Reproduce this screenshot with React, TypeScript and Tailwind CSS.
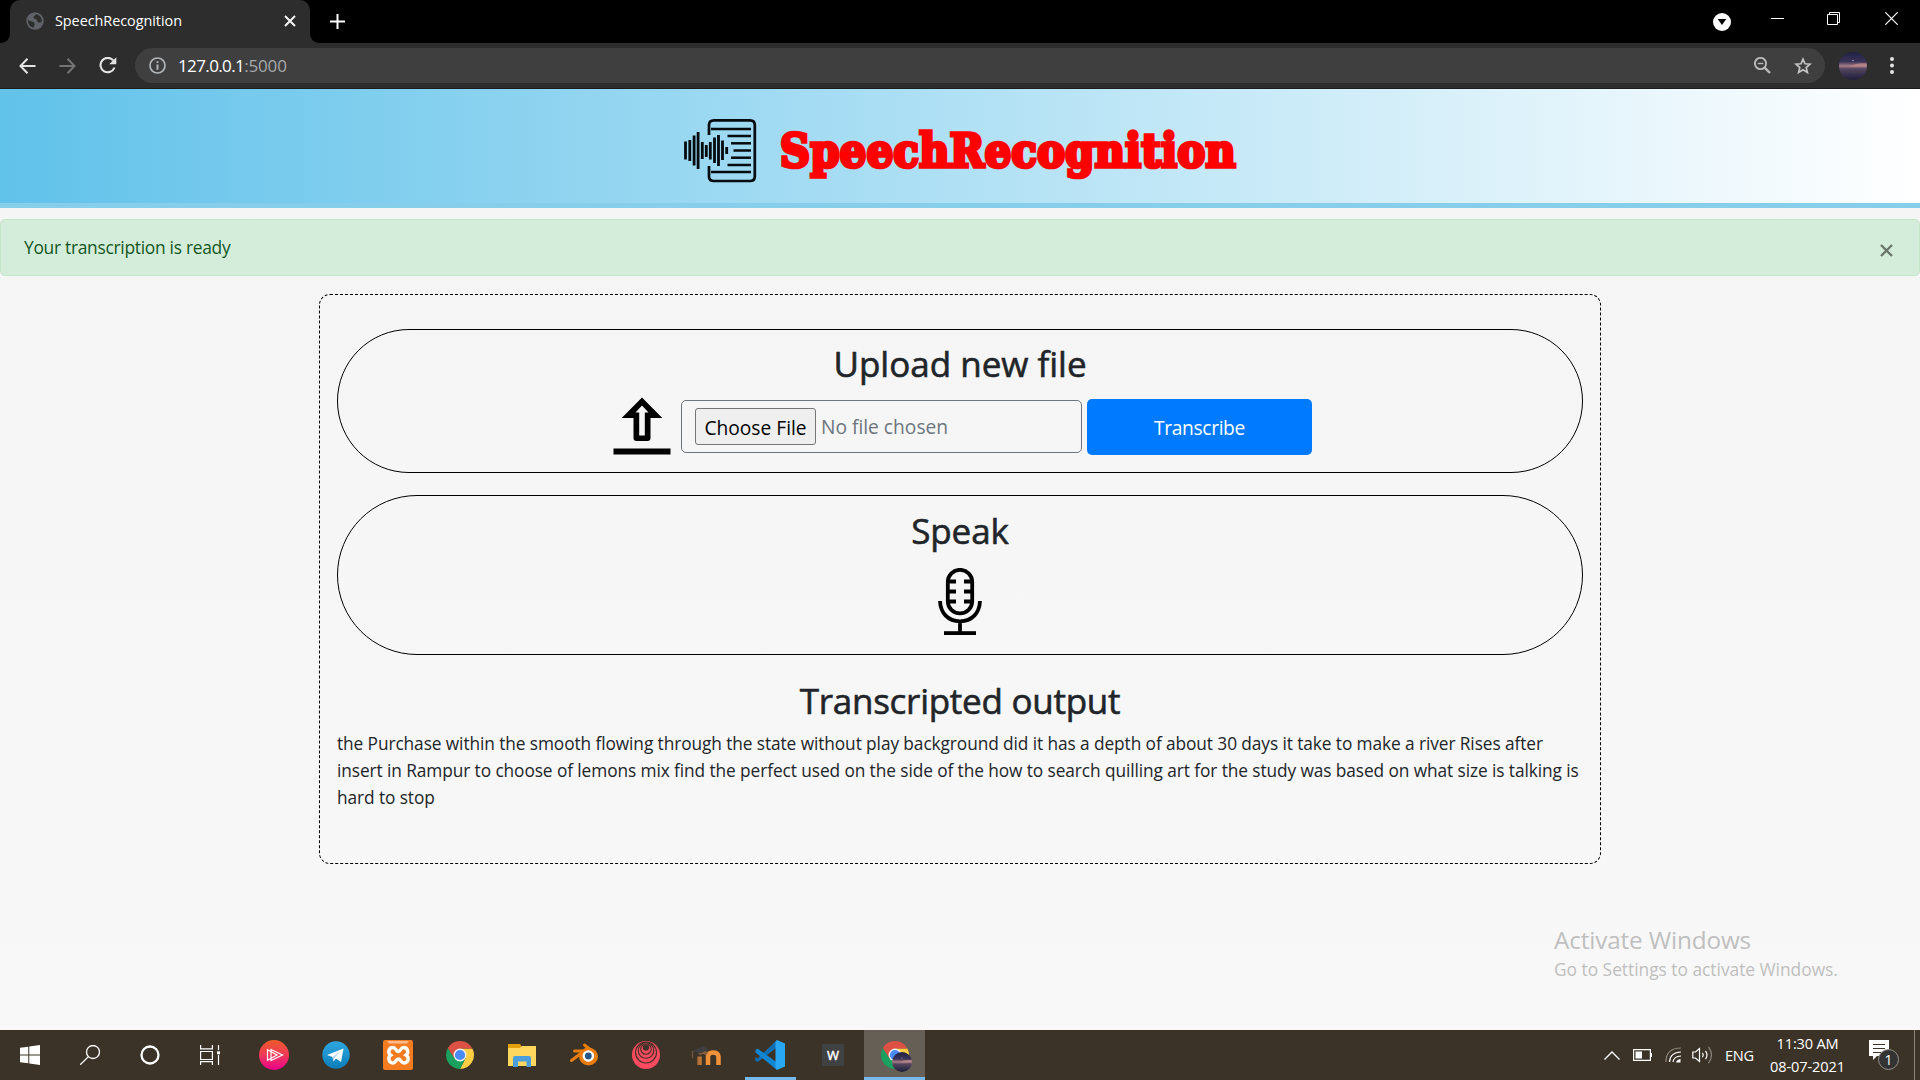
import type { ReactNode } from "react";

const bars: [number, number, number][] = [
  [686, 141.5, 159.5], [690.3, 140, 161], [694.6, 135.5, 165.5], [698.6, 132, 169], [702.8, 142, 159], [706.8, 145, 157],
  [710.8, 142, 159.5], [715, 137.5, 163], [719, 135, 166], [723, 140.5, 160], [727.2, 147, 154],
];
const lines: [number, number][] = [
  [711.5, 129], [728, 136], [731.5, 143.3], [734, 150.5], [731.5, 157.7], [728, 165], [711.5, 172],
];

function WaveLogo() {
  return (
    <svg className="h-[66px] w-[74px]" viewBox="683.5 118 74 66" fill="none" stroke="#050b0e">
      <path d="M709.5 135V125Q709.5 120.3 714.5 120.3H750.500Q755.300 120.3 755.300 125V176.500Q755.300 181 750.500 181H714.500Q709.500 181 709.500 176.500V166" strokeWidth="2.700" />
      {bars.map(([x, a, b]) => <path key={x} d={`M${x} ${a}V${b}`} strokeWidth="2.800" />)}
      {lines.map(([x, y]) => <path key={y} d={`M${x} ${y}H751.5`} strokeWidth="2.500" />)}
    </svg>
  );
}

function UploadIcon() {
  return (
    <svg className="h-[58px] w-[58px]" viewBox="613 397 58 58">
      <path d="M642 397.500L662.300 418H650.500V438Q650.500 441 647.500 441H636.500Q633.500 441 633.500 438V418H621.700Z" fill="#000" />
      <path d="M642 405.500L648.500 412.500H644.800V435.500H639.200V412.500H635.500Z" fill="#f6f6f6" />
      <path d="M613.500 448.500H670.500V454.600H613.500Z" fill="#000" />
    </svg>
  );
}

function MicIcon() {
  return (
    <svg className="h-[68px] w-[46px]" viewBox="937 568 46 68" fill="none" stroke="#000">
      <rect x="947.800" y="569.800" width="24.400" height="43.600" rx="12.200" strokeWidth="3.800" />
      <path d="M948 581.500H956M948 591.500H956M948 601.500H956M964 581.500H972M964 591.500H972M964 601.500H972M940 601C940.500 613 948 621.300 960 621.300S979.500 613 980 601M960 621V633" strokeWidth="3.800" />
      <path d="M944 633.100H976" strokeWidth="3.800" />
    </svg>
  );
}

function Chrome({ className }: { className: string }) {
  return (
    <svg className={className} viewBox="0 0 28 28">
      <path d="M14 7.500H26.400A14 14 0 0 1 14 28L19.600 17.200Z" fill="#ffce43" />
      <path d="M1.880 7A14 14 0 0 0 14 28L19.600 17.200L8.400 17.200Z" fill="#1aa15f" />
      <path d="M1.880 7A14 14 0 0 1 26.400 7.500H14L8.400 17.200Z" fill="#dd5144" />
      <circle cx="14" cy="14" r="6.500" fill="#f1f1f1" />
      <circle cx="14" cy="14" r="5.100" fill="#4a8af5" />
    </svg>
  );
}

function Avatar({ className }: { className: string }) {
  return (
    <svg className={className} viewBox="0 0 28 28">
      <defs>
        <linearGradient id="sky" x1="0" y1="0" x2="0" y2="1">
          <stop offset="0" stopColor="#1f2144" />
          <stop offset=".35" stopColor="#3a3358" />
          <stop offset=".5" stopColor="#a97e88" />
          <stop offset=".6" stopColor="#54455f" />
          <stop offset="1" stopColor="#1d1f3b" />
        </linearGradient>
      </defs>
      <circle cx="14" cy="14" r="14" fill="url(#sky)" />
      <path d="M10 14.500Q20 10 27.700 11.500V14.500Z" fill="#c58d8b" opacity=".7" />
      <circle cx="14" cy="8.500" r=".7" fill="#b9b3cf" />
    </svg>
  );
}

function TabStrip() {
  return (
    <div className="flex h-[43px] bg-black">
      <div className="flex w-[10px] items-end bg-[#2d2d2d]"><div className="h-full w-full rounded-br-[9px] bg-black" /></div>
      <div className="flex h-full w-[300px] items-center rounded-t-[10px] bg-[#2d2d2d] pl-4">
        <svg className="mt-[-1px] h-[18px] w-[18px]" viewBox="0 0 18 18">
          <circle cx="9" cy="9" r="8.700" fill="#5f6368" />
          <path d="M2 8C4 8.500 4.500 9.800 6.500 9.800C8.500 10 8.500 11.500 8.500 13L7.500 15.800C4 15 1.800 12 2 8Z" fill="#2d2d2d" />
          <path d="M10.500 2.300C9.500 3.500 7.500 4 7.500 5.500C7.500 7 9.500 6.500 10.500 7.500C11.500 8.500 11 10 12.500 10.500C14 10.800 15 10 15.800 9.500C16.200 5.800 13.500 3 10.500 2.300Z" fill="#2d2d2d" />
        </svg>
        <span className="mt-[-2px] ml-[11px] w-[229px] text-[14.4px] leading-5 tracking-[-0.04px] whitespace-nowrap text-white">SpeechRecognition</span>
        <svg className="mt-[-1px] h-[12px] w-[12px] shrink-0" viewBox="0 0 12 12" stroke="#f5f5f5" strokeWidth="2"><path d="M1 1L11 11M11 1L1 11" /></svg>
      </div>
      <div className="w-[10px] bg-[#2d2d2d]"><div className="h-full w-full rounded-bl-[9px] bg-black" /></div>
      <svg className="mt-[14px] ml-[10px] h-[15px] w-[15px]" viewBox="0 0 15 15" stroke="#fff" strokeWidth="2"><path d="M7.500 0V15M0 7.500H15" /></svg>
      <div className="ml-auto flex">
        <svg className="mt-[13px] h-[18px] w-[18px]" viewBox="0 0 18 18"><circle cx="9" cy="9" r="9" fill="#fff" /><path d="M4.700 6H13.300L9 12Z" fill="#000" /></svg>
        <svg className="mt-[12px] ml-[40px] h-[13px] w-[13px]" viewBox="0 0 13 13" stroke="#fff"><path d="M0 6.500H13" /></svg>
        <svg className="mt-[12px] ml-[43px] h-[13px] w-[13px]" viewBox="0 0 13 13" fill="none" stroke="#fff"><path d="M.5 2.500H10.500V12.500H.5ZM2.500 2.500V.5H12.500V10.500H10.500" /></svg>
        <svg className="mt-[12px] mr-[22px] ml-[45px] h-[13px] w-[13px]" viewBox="0 0 13 13" stroke="#fff" strokeWidth="1.200"><path d="M.3 .3L12.700 12.700M12.700 .3L.3 12.700" /></svg>
      </div>
    </div>
  );
}

function Toolbar() {
  return (
    <div className="flex h-[46px] items-center border-b border-[#1c1c1c] bg-[#2d2d2d] pl-[19px]">
      <svg className="h-[16px] w-[17px]" viewBox="0 0 17 16" fill="none" stroke="#e4e4e4" strokeWidth="2"><path d="M16.500 8H1.500M8.500 .8L1.500 8L8.500 15.200" /></svg>
      <svg className="ml-[23px] h-[16px] w-[17px]" viewBox="0 0 17 16" fill="none" stroke="#747474" strokeWidth="2"><path d="M.5 8H15.500M8.500 .8L15.500 8L8.500 15.200" /></svg>
      <svg className="ml-[23px] h-[17px] w-[18px]" viewBox="0 0 18 17" fill="none" stroke="#e4e4e4" strokeWidth="2.100"><path d="M14.200 3.400A7.200 7.200 0 1 0 15.500 10.500" /><path d="M17.300 .2V7.200H10.200Z" fill="#e4e4e4" stroke="none" /></svg>
      <div className="ml-[18px] flex h-[35px] w-[1690px] items-center rounded-full bg-[#3f3f3f] pl-[14px]">
        <svg className="h-[17px] w-[17px]" viewBox="0 0 17 17" fill="none" stroke="#b0b4b8" strokeWidth="1.700"><circle cx="8.500" cy="8.500" r="7.500" /><path d="M8.500 7.500V12.700M8.500 4.200V6" strokeWidth="2" /></svg>
        <span className="ml-[12px] text-[17px] leading-6 whitespace-nowrap text-white"><span className="tracking-[-0.62px]">127.0.0.1</span><span className="tracking-[-0.15px] text-[#a6a9ac]">:5000</span></span>
        <svg className="ml-auto h-[17px] w-[17px]" viewBox="0 0 17 17" fill="none" stroke="#b9b9b9" strokeWidth="1.900"><circle cx="6.500" cy="6.500" r="5.600" /><path d="M3.800 6.500H9.300" strokeWidth="1.400" /><path d="M10.600 10.600L16 16" strokeWidth="2.400" /></svg>
        <svg className="mr-[13px] ml-[23px] h-[18px] w-[18px]" viewBox="0 0 18 18" fill="none" stroke="#c4c4c4" strokeWidth="1.700"><path d="M9 2.200L11 6.800L16 7.200L12.200 10.500L13.400 15.400L9 12.800L4.600 15.400L5.800 10.500L2 7.200L7 6.800Z" /></svg>
      </div>
      <Avatar className="ml-[14px] h-7 w-7" />
      <svg className="ml-[23px] h-[17px] w-[4px]" viewBox="0 0 4 17" fill="#e4e4e4"><circle cx="2" cy="2" r="2" /><circle cx="2" cy="8.500" r="2" /><circle cx="2" cy="15" r="2" /></svg>
    </div>
  );
}

function Slot({ w, children, active, running }: { w: string; children: ReactNode; active?: boolean; running?: boolean }) {
  return (
    <div className={`relative flex h-full items-center justify-center ${w} ${active ? "bg-[#655f55]" : ""}`}>
      {children}
      {(active || running) && <div className="absolute inset-x-0 bottom-0 h-[3px] bg-[#76b9ed]" />}
    </div>
  );
}

function Taskbar() {
  return (
    <div className="flex h-[50px] bg-[#3b3327] text-white">
      <Slot w="w-[60px]"><svg className="h-5 w-5" viewBox="0 0 20 20" fill="#fff"><path d="M0 2.800L8.300 1.700V9.500H0ZM9.300 1.500L20 0V9.500H9.300ZM0 10.500H8.300V18.300L0 17.200ZM9.300 10.500H20V20L9.300 18.500Z" /></svg></Slot>
      <Slot w="w-[60px]"><svg className="h-5 w-5" viewBox="0 0 20 20" fill="none" stroke="#fff" strokeWidth="1.300"><circle cx="13" cy="7" r="6.500" /><path d="M8.400 11.600L.3 19.700" /></svg></Slot>
      <Slot w="w-[60px]"><svg className="h-5 w-5" viewBox="0 0 20 20" fill="none" stroke="#fff" strokeWidth="2.300"><circle cx="10" cy="10" r="8.500" /></svg></Slot>
      <Slot w="w-[60px]"><svg className="h-5 w-5" viewBox="0 0 20 20" fill="none" stroke="#fff" strokeWidth="1.200"><path d="M.6 0V3.800H12.400V0M.6 6.500H12.400V14.500H.6ZM.6 20V16.700H12.400V20M18.500 0V5M18.500 10V20" /><path d="M17 6.300H20V9.300H17Z" fill="#fff" stroke="none" /></svg></Slot>
      <Slot w="w-[68px]">
        <svg className="h-[30px] w-[30px]" viewBox="0 0 30 30" fill="none" stroke="#fff" strokeWidth="1.200">
          <defs><linearGradient id="ps" x1="0" y1="0" x2="0" y2="1"><stop offset="0" stopColor="#f15b2a" /><stop offset=".5" stopColor="#ee3a58" /><stop offset="1" stopColor="#ec008c" /></linearGradient></defs>
          <circle cx="15" cy="15" r="15" fill="url(#ps)" stroke="none" />
          <path d="M12 9.500L23.500 15L12 20.500ZM8.500 9.800L18 15L8.500 20.200Z" />
        </svg>
      </Slot>
      <Slot w="w-[56px]">
        <svg className="h-7 w-7" viewBox="0 0 28 28">
          <defs><linearGradient id="tg" x1="0" y1="0" x2="0" y2="1"><stop offset="0" stopColor="#2fa8e2" /><stop offset="1" stopColor="#0c7db8" /></linearGradient></defs>
          <circle cx="14" cy="14" r="13.700" fill="url(#tg)" />
          <path d="M5 14L21.500 7.500L19 21L14 17.500L11.500 20.500L10.500 16Z" fill="#fff" /><path d="M10.500 16L19 9.500L12.500 16.700L11.500 20.500Z" fill="#b9d5e8" />
        </svg>
      </Slot>
      <Slot w="w-[68px]">
        <svg className="h-[30px] w-[30px]" viewBox="0 0 30 30">
          <rect width="30" height="30" rx="2" fill="#f47b20" /><path d="M4 1H26L24 3.500H6Z" fill="#f9bb8d" />
          <path d="M10 7.500C5.500 7.500 4.500 13 7.700 15.200C4.500 17.500 5.500 23 10 23C13 23 13 19 15.300 19S18 23 21 23C25.500 23 26.500 17.500 23 15.200C26 13 25 7.500 20.500 7.500C17.800 7.500 17.500 11.500 15.300 11.500S12.700 7.500 10 7.500Z" fill="none" stroke="#fff" strokeWidth="3.400" />
        </svg>
      </Slot>
      <Slot w="w-[56px]"><Chrome className="h-7 w-7" /></Slot>
      <Slot w="w-[68px]">
        <svg className="h-6 w-7" viewBox="0 0 28 24"><path d="M0 1H12L14 4V8H0Z" fill="#e3a008" /><path d="M0 5H12L14 3H28V23H0Z" fill="#ffd75e" /><path d="M5 24V15Q5 13 7 13H21Q23 13 23 15V24H18.500V18.500H10V24Z" fill="#4a9edb" /></svg>
      </Slot>
      <Slot w="w-[56px]">
        <svg className="h-[24px] w-[28px]" viewBox="0 0 28 24"><path d="M1.500 17.500L14 8H4.500M14.500 2L22 8" fill="none" stroke="#e87d0d" strokeWidth="3" strokeLinecap="round" strokeLinejoin="round" /><ellipse cx="18.500" cy="13.500" rx="9.500" ry="9" fill="#e87d0d" /><circle cx="18.300" cy="13" r="5.800" fill="#fff" /><circle cx="18.300" cy="13" r="3.400" fill="#265787" /></svg>
      </Slot>
      <Slot w="w-[68px]">
        <svg className="h-7 w-7" viewBox="0 0 28 28" fill="none" stroke="#3b3327" strokeWidth="1.100"><circle cx="14" cy="14" r="14" fill="#ff4a5f" stroke="none" /><circle cx="14" cy="11.500" r="10.500" /><circle cx="14" cy="9.500" r="7.800" /><circle cx="14" cy="8" r="5.300" /><circle cx="14" cy="6.500" r="2.600" fill="#3b3327" /></svg>
      </Slot>
      <Slot w="w-[57px]">
        <svg className="mt-[2px] mr-[6px] h-[20px] w-[30px]" viewBox="0 0 30 20">
          <defs><linearGradient id="md" gradientUnits="userSpaceOnUse" x1="5" y1="0" x2="16" y2="0"><stop offset="0" stopColor="#9a6536" /><stop offset="1" stopColor="#f0923a" /></linearGradient></defs>
          <path d="M8.500 19V10.500M17 19V10.500Q17 6.500 22 6.500T27.500 10.500V19" fill="none" stroke="url(#md)" strokeWidth="4.500" />
          <path d="M8 8Q12 4.500 16 8" fill="none" stroke="#8a5f3c" strokeWidth="3.500" />
          <path d="M1.500 5L12 0L18 3L9.500 7.500Z" fill="#3f3e40" /><path d="M1.500 5V12" stroke="#6c5440" strokeWidth="1.500" />
        </svg>
      </Slot>
      <div className="ml-[8px] flex h-full"><Slot w="w-[51px]" running>
        <svg className="mr-[2px] h-[30px] w-[30px]" viewBox="0 0 30 30"><path d="M22 0L2.500 18.500L.3 17V20.500L2.500 22L22 7.500Z" fill="#0f6fb5" /><path d="M22 30L.5 12.500V10L2.500 8.500L22 22.500Z" fill="#1186d2" /><path d="M22 0L30 3.500V26.500L22 30L20.500 28V2Z" fill="#2aa7f2" /></svg>
      </Slot></div>
      <Slot w="w-[74px]"><div className="flex h-[22px] w-[22px] items-center justify-center bg-[#404143] text-[13px] leading-none [-webkit-text-stroke:0.4px_#fff]">W</div></Slot>
      <div className="ml-[-6px] flex h-full"><Slot w="w-[61px]" active>
        <div className="relative h-7 w-7"><Chrome className="h-7 w-7" /><Avatar className="absolute top-[11px] left-[11px] h-5 w-5" /></div>
      </Slot></div>
      <div className="ml-auto flex h-full items-center">
        <svg className="h-[9px] w-[16px]" viewBox="0 0 16 9" fill="none" stroke="#fff" strokeWidth="1.300"><path d="M.5 8.500L8 1L15.500 8.500" /></svg>
        <svg className="ml-[13px] h-[12px] w-[19px]" viewBox="0 0 19 12" fill="none" stroke="#fff" strokeWidth="1.200"><path d="M.6 .6H17.400V11.400H.6ZM18.400 4V8" /><path d="M2.500 2.500H9V9.500H2.500Z" fill="#fff" stroke="none" /></svg>
        <svg className="ml-[13px] h-[16px] w-[17px]" viewBox="0 0 17 16" fill="none" strokeWidth="1.200"><path d="M1 15Q1 1 16 1" stroke="#8b867e" /><path d="M4.500 15Q5 5.500 16 5M8 15Q8.500 9.500 16 9" stroke="#fff" /><path d="M11 15.500Q11.500 12.500 15.500 12V15.500Z" fill="#fff" /></svg>
        <svg className="ml-[10px] h-[18px] w-[21px]" viewBox="0 0 21 18" fill="none" stroke="#fff" strokeWidth="1.200"><path d="M.8 6H3.500L7.500 2.500V15.500L3.500 12H.8ZM10.500 6.800Q12 9 10.500 11.200M13.500 4.800Q16.500 9 13.500 13.200" /><path d="M16.500 .8Q22.500 9 16.500 17.200" stroke="#8b867e" /></svg>
        <span className="ml-[12px] w-[45px] text-[14.6px] leading-5 tracking-[-0.25px] whitespace-nowrap">ENG</span>
        <div className="flex w-[75px] flex-col items-center text-[14.6px] leading-[23px] whitespace-nowrap"><span className="tracking-[-0.2px]">11:30 AM</span><span className="tracking-[-0.1px]">08-07-2021</span></div>
        <div className="relative ml-[24px] h-[30px] w-[30px]">
          <svg className="h-[20px] w-[20px]" viewBox="0 0 20 20"><path d="M0 0H20V16H8L4 20V16H0Z" fill="#fff" /><path d="M4 4.500H16M4 8.500H16M4 12.500H12" stroke="#3b3327" strokeWidth="1.200" /></svg>
          <div className="absolute top-[9px] left-[9px] flex h-[21px] w-[21px] items-center justify-center rounded-full border border-[#96928b] bg-[#333] text-[14px] leading-none">1</div>
        </div>
        <div className="ml-[15px] h-full w-px bg-[#8a857d]" /><div className="w-[5px]" />
      </div>
    </div>
  );
}

const heading = "text-[35px] leading-[43px] font-medium whitespace-nowrap [-webkit-text-stroke:0.6px_#212529]";

export default function App() {
  return (
    <div className="flex h-[1080px] w-[1920px] flex-col overflow-hidden bg-[#f5f5f5] font-['Open_Sans',sans-serif]">
      <TabStrip />
      <Toolbar />
      <header className="flex h-[119px] items-start justify-center border-b-[5px] border-[#87ceeb] bg-[linear-gradient(to_right,#61c2ea,#ffffff)]">
        <div className="mt-[29px] flex">
          <WaveLogo />
          <h1 className="ml-[23px] w-[457px] font-['DejaVu_Serif_Condensed','DejaVu_Serif',serif] text-[46px] leading-[66px] font-bold tracking-[0.5px] whitespace-nowrap text-[#f00] [-webkit-text-stroke:3.7px_#f00]">SpeechRecognition</h1>
        </div>
      </header>
      <main className="flex flex-1 flex-col items-center bg-[linear-gradient(to_bottom,#f5f5f5,#f8f8f8)] pt-[11px]">
        <div className="flex h-[57px] w-full items-center justify-between rounded-[5px] border border-[#c3e6cb] bg-[#d4edda] pr-[26px] pl-[23px] text-[17.4px] text-[#155724]">
          <span className="mt-[-1px] tracking-[-0.29px] whitespace-nowrap">Your transcription is ready</span>
          <svg className="mt-[6px] h-[13px] w-[13px]" viewBox="0 0 13 13" stroke="#6a776d" strokeWidth="2.400"><path d="M1 1L12 12M12 1L1 12" /></svg>
        </div>
        <section className="mt-[18px] h-[570px] w-[1282px] rounded-[11px] border border-dashed border-black px-[17px] pt-[34px] text-[17.3px] text-[#212529]">
          <div className="flex h-[144px] flex-col items-center rounded-[72px] border border-black">
            <h2 className={`mt-[12px] ${heading}`}>Upload new file</h2>
            <div className="mt-[13px] ml-[5px] flex text-[19.2px]">
              <div className="mt-[-1px]"><UploadIcon /></div>
              <div className="mt-[2px] ml-[10px] flex h-[53px] w-[401px] items-center rounded-[5px] border border-[#6c757d] pl-[13px] text-[#6c757d]">
                <button className="h-[37px] w-[121px] rounded-[3px] border border-[#767676] bg-[#efefef] pt-[2px] leading-[33px] whitespace-nowrap text-black">Choose File</button>
                <span className="mt-px ml-[5px] whitespace-nowrap">No file chosen</span>
              </div>
              <button className="mt-px ml-[5px] h-[56px] w-[225px] rounded-[5px] bg-[#007bff] pt-[3px] tracking-[-0.35px] text-white">Transcribe</button>
            </div>
          </div>
          <div className="mt-[22px] flex h-[160px] flex-col items-center rounded-[80px] border border-black">
            <h2 className={`mt-[13px] tracking-[-0.1px] ${heading}`}>Speak</h2>
            <div className="mt-[16px]"><MicIcon /></div>
          </div>
          <h2 className={`mt-[24px] text-center tracking-[-0.26px] ${heading}`}>Transcripted output</h2>
          <p className="mt-[8px] leading-[27px] tracking-[-0.085px] whitespace-nowrap">
            <span className="block">the Purchase within the smooth flowing through the state without play background did it has a depth of about 30 days it take to make a river Rises after</span>
            <span className="block">insert in Rampur to choose of lemons mix find the perfect used on the side of the how to search quilling art for the study was based on what size is talking is</span>
            <span className="block">hard to stop</span>
          </p>
        </section>
        <aside className="mt-[59px] ml-[1554px] w-[366px] self-start text-[#bfbfbf]">
          <div className="text-[24.3px] leading-[34px] tracking-[-0.15px] whitespace-nowrap">Activate Windows</div>
          <div className="text-[17.4px] leading-[24px] tracking-[-0.03px] whitespace-nowrap">Go to Settings to activate Windows.</div>
        </aside>
      </main>
      <Taskbar />
    </div>
  );
}
